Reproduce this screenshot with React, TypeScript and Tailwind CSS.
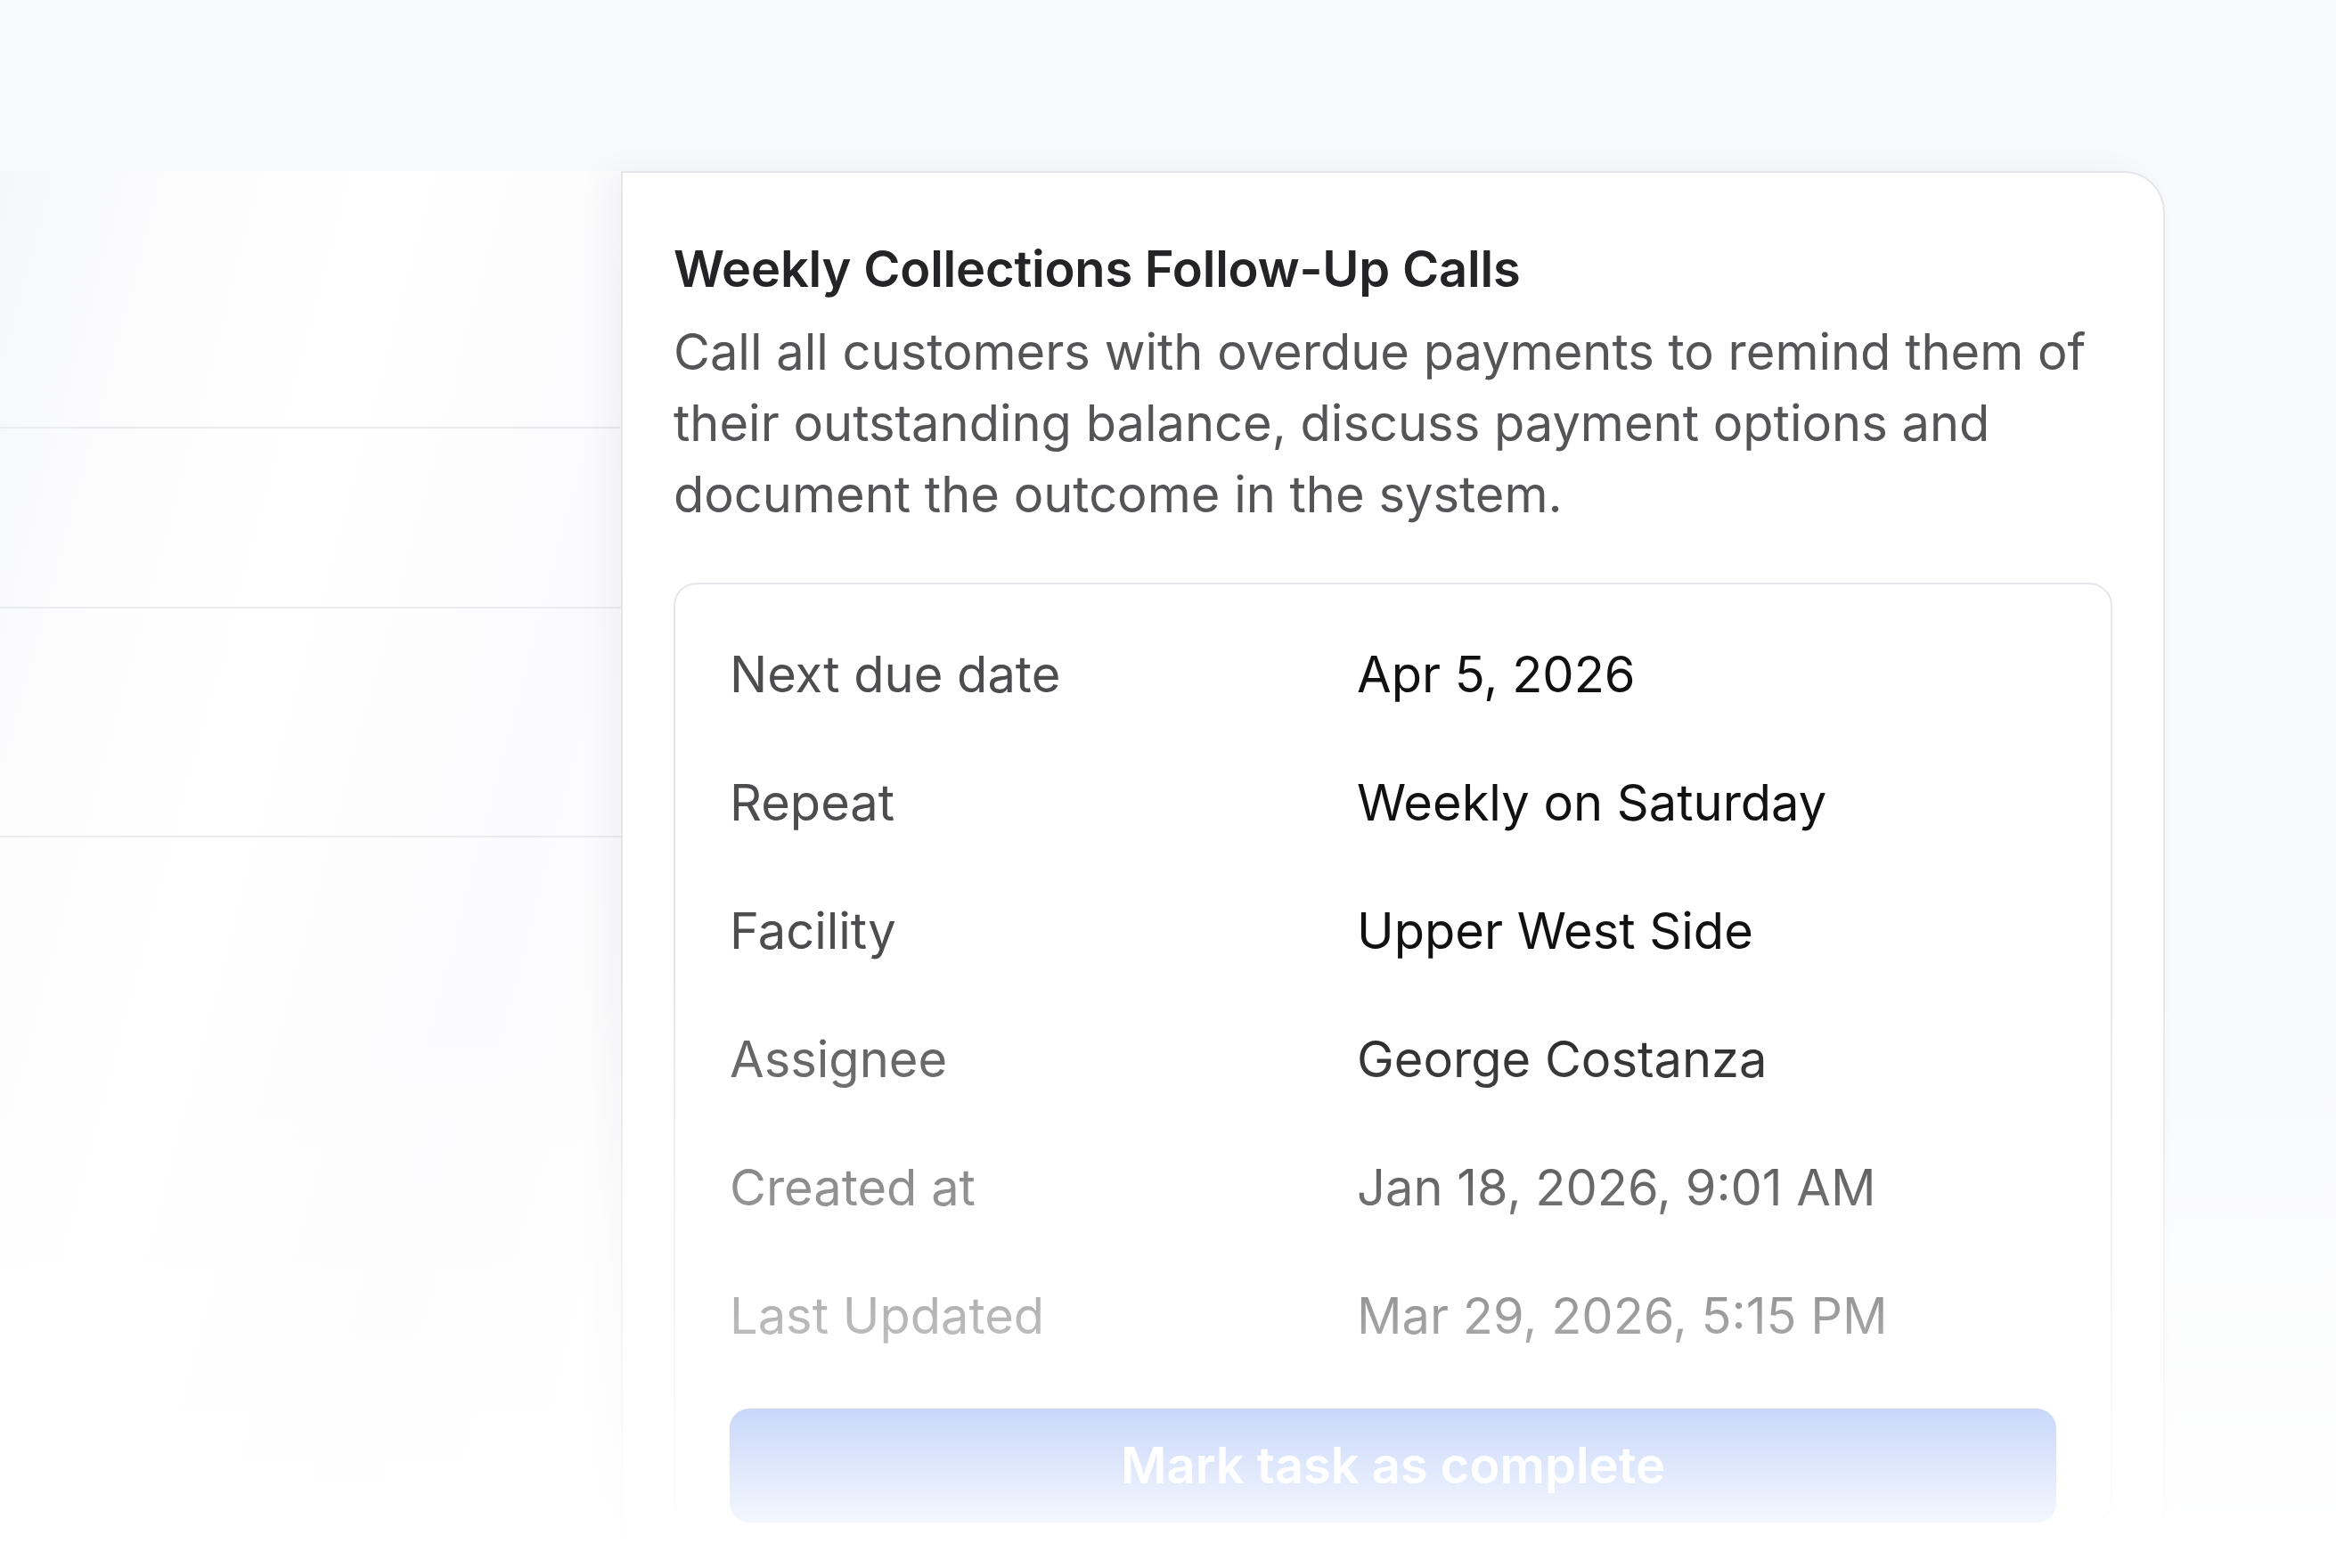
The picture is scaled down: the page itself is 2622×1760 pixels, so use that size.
import React from "react";

interface DetailRow {
  label: string;
  value: string;
}

const details: DetailRow[] = [
  { label: "Next due date", value: "Apr 5, 2026" },
  { label: "Repeat", value: "Weekly on Saturday" },
  { label: "Facility", value: "Upper West Side" },
  { label: "Assignee", value: "George Costanza" },
  { label: "Created at", value: "Jan 18, 2026, 9:01 AM" },
  { label: "Last Updated", value: "Mar 29, 2026, 5:15 PM" },
];

const App = () => {
  return (
    <div className="relative flex h-[1760px] w-[2622px] overflow-hidden bg-[#f8f9fb] pt-[192px] font-[Inter,sans-serif] antialiased">
      {/* list behind the sheet */}
      <div className="flex w-[697px] shrink-0 flex-col bg-[linear-gradient(105deg,#f6f7f9,#fdfdfe_22%,#ffffff_40%,#fbfbfd_70%,#ffffff)]">
        <div className="h-[289px] border-b-2 border-[#eaecf0]" />
        <div className="h-[202px] border-b-2 border-[#eaecf0]" />
        <div className="h-[257px] border-b-2 border-[#eaecf0]" />
        <div className="flex-1" />
      </div>

      {/* task sheet */}
      <div className="flex w-[1733px] shrink-0 flex-col rounded-tr-[46px] border-x-2 border-t-2 border-[#e4e6ea] bg-white px-[57px] pt-[68px] shadow-[-18px_0_36px_rgba(15,23,42,0.04)]">
        <h2 className="text-[56px] font-semibold leading-[80px] tracking-[-0.2px] text-[#242426]">
          Weekly Collections Follow-Up Calls
        </h2>
        <p className="mt-[13px] text-[56px] leading-[80px] text-[#555557]">
          Call all customers with overdue payments to remind them of their
          outstanding balance, discuss payment options and document the
          outcome in the system.
        </p>

        <div className="mt-[59px] flex flex-col gap-[64px] rounded-[26px] border-2 border-[#e6e7ea] px-[61px] pt-[61px]">
          {details.map((row) => (
            <div key={row.label} className="flex text-[56px] leading-[80px]">
              <span className="w-[704px] shrink-0 text-[#4d4d4f]">
                {row.label}
              </span>
              <span className="text-[#111111]">{row.value}</span>
            </div>
          ))}
          <button className="flex h-[128px] w-full items-center justify-center rounded-[22px] bg-[#2563eb] text-[56px] font-semibold text-white">
            Mark task as complete
          </button>
        </div>
      </div>

      <div className="flex-1" />

      {/* bottom fade */}
      <div className="pointer-events-none absolute inset-0 bg-[linear-gradient(to_bottom,rgba(255,255,255,0)_62%,#ffffff_99%)]" />
    </div>
  );
};

export default App;
